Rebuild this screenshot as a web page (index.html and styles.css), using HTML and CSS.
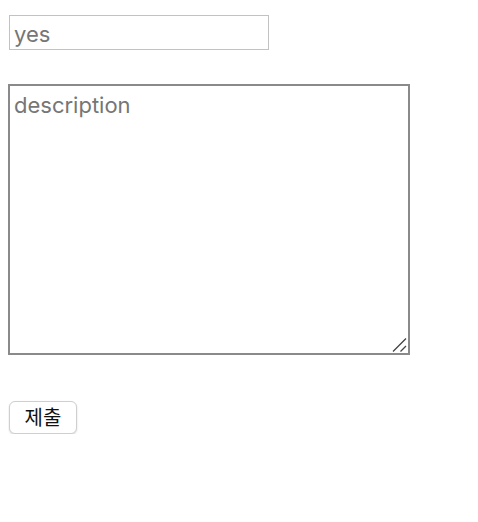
FILE: index.html
```html
<!DOCTYPE html>
<html>
<head>
<meta charset="utf-8">
<link rel="stylesheet" href="styles.css">
</head>
<body>
<form class="form">
  <input class="title" type="text" placeholder="yes">
  <div class="desc-wrap">
    <textarea class="desc" placeholder="description"></textarea>
    <svg class="grip" width="16" height="16" viewBox="0 0 16 16">
      <path d="M2 14.5 L15 1.5 M9.5 14.5 L15 9" stroke="#444" stroke-width="1.3" fill="none"/>
    </svg>
  </div>
  <button class="submit" type="button">제출</button>
</form>
</body>
</html>
```
FILE: styles.css
```css
body {
  margin: 8px;
  background: #fff;
  font-family: "Inter", "Noto Sans CJK KR", sans-serif;
}
.form {
  display: flex;
  flex-direction: column;
  align-items: flex-start;
  padding-top: 7px;
}
.title {
  box-sizing: border-box;
  width: 260px;
  height: 35px;
  margin: 0 0 34px 1px;
  padding: 2px 4px 0;
  border: 1px solid #c2c2c2;
  border-radius: 0;
  font-family: inherit;
  font-size: 22px;
  color: #333;
  outline: none;
}
.title::placeholder, .desc::placeholder {
  color: #767676;
}
.desc-wrap {
  position: relative;
  margin: 0 0 46px 0;
  line-height: 0;
}
.desc {
  box-sizing: border-box;
  width: 402px;
  height: 271px;
  margin: 0;
  padding: 6px 4px 3px;
  border: 2px solid #8a8a8a;
  border-radius: 0;
  font-family: inherit;
  font-size: 22px;
  line-height: 1.2;
  resize: none;
  outline: none;
}
.grip {
  position: absolute;
  right: 3px;
  bottom: 2px;
}
.submit {
  box-sizing: border-box;
  width: 68px;
  height: 33px;
  margin-left: 1px;
  border: 1px solid #cfcfcf;
  border-radius: 6px;
  background: #fff;
  box-shadow: 0 1px 2px rgba(0,0,0,0.15);
  font-family: "Noto Sans CJK KR", sans-serif;
  font-size: 20px;
  line-height: 1;
  color: #111;
  padding: 0 0 2px;
}
```
